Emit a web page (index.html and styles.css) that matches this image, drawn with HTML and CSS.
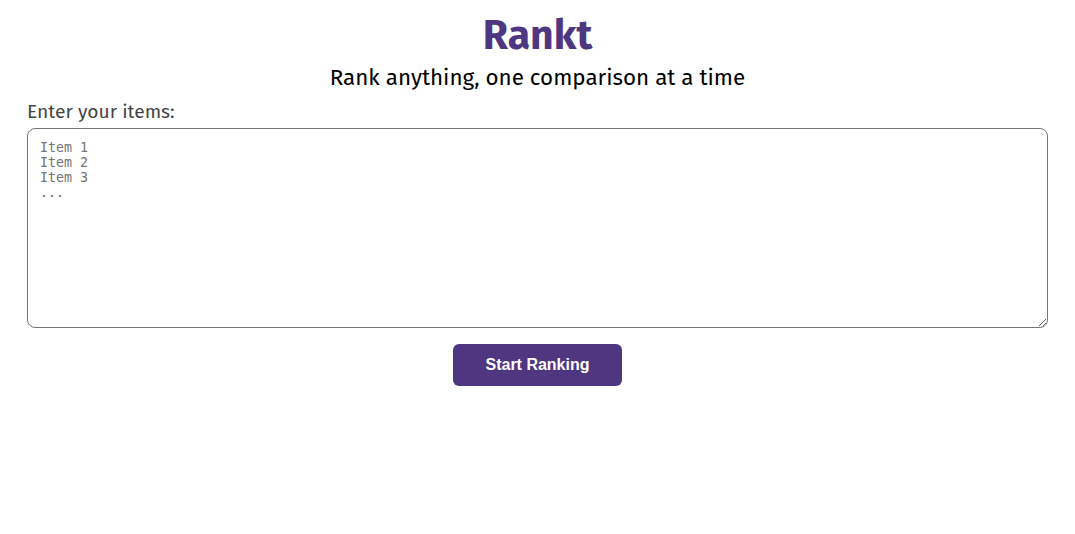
FILE: index.html
```html
<!DOCTYPE html>
<html lang="en">
<head>
<meta charset="utf-8">
<title>Rankt</title>
<link rel="stylesheet" href="styles.css">
</head>
<body>
<main class="app">
  <header class="hero">
    <h1 class="title">Rankt</h1>
    <p class="subtitle">Rank anything, one comparison at a time</p>
  </header>
  <label class="label" for="items">Enter your items:</label>
  <textarea id="items" class="items" placeholder="Item 1&#10;Item 2&#10;Item 3&#10;..."></textarea>
  <div class="actions">
    <button class="start" type="button">Start Ranking</button>
  </div>
</main>
</body>
</html>
```

FILE: styles.css
```css
html, body {
  margin: 0;
  padding: 0;
  background: #ffffff;
}
body {
  font-family: "Fira Sans", "Noto Sans", sans-serif;
  color: #000;
}
.app {
  padding: 0 27px;
  display: flex;
  flex-direction: column;
}
.hero {
  text-align: center;
}
.title {
  margin: 12px 0 0;
  font-size: 41px;
  line-height: 48px;
  font-weight: 700;
  color: #4f3681;
}
.subtitle {
  margin: 3px 0 0;
  font-size: 22.4px;
  line-height: 30px;
}
.label {
  margin-top: 7px;
  font-size: 19.2px;
  line-height: 24px;
  color: #444;
}
.items {
  margin-top: 4px;
  box-sizing: border-box;
  width: 100%;
  height: 200px;
  padding: 11px 12px 10px;
  border: 1px solid #767676;
  border-radius: 8px;
  font-family: "DejaVu Sans Mono", monospace;
  font-size: 13.333px;
  line-height: 15px;
  resize: vertical;
}
.items::placeholder {
  color: #757575;
}
.actions {
  display: flex;
  justify-content: center;
  margin-top: 16px;
}
.start {
  width: 169px;
  height: 42px;
  border: none;
  border-radius: 6px;
  background: #4f3681;
  color: #fff;
  font-family: "Liberation Sans", Arial, sans-serif;
  font-weight: 700;
  font-size: 16px;
}
```
